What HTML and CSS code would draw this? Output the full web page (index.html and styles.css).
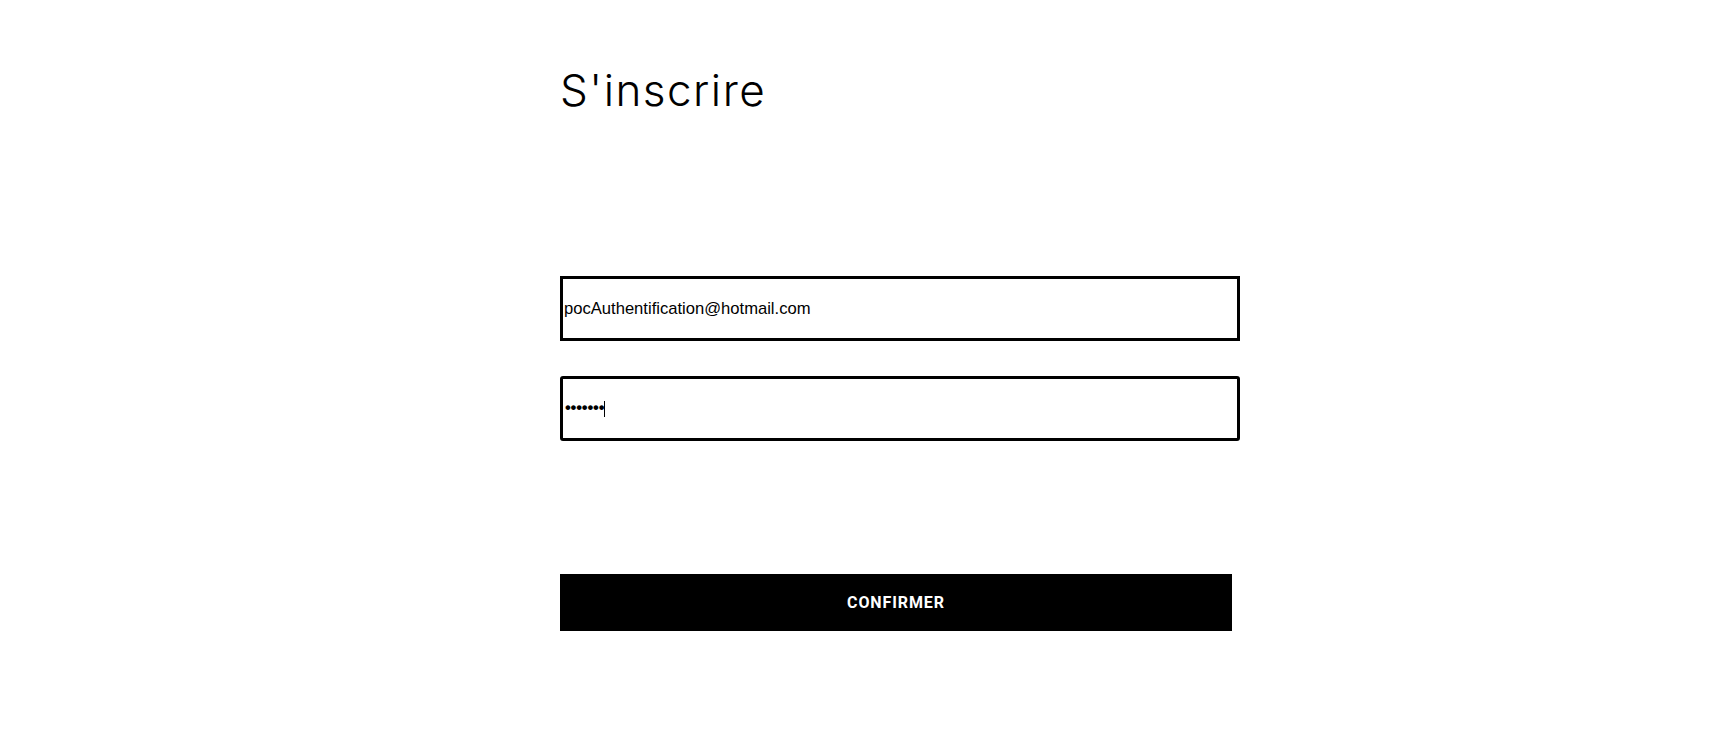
FILE: index.html
```html
<!DOCTYPE html>
<html lang="fr">
<head>
<meta charset="utf-8">
<title>S'inscrire</title>
<link rel="stylesheet" href="styles.css">
</head>
<body>
<main class="page">
  <h1 class="title">S'inscrire</h1>
  <form class="form">
    <div class="field">
      <input class="input" type="email" value="pocAuthentification@hotmail.com">
    </div>
    <div class="field">
      <div class="input input-focus"><span class="dots">•••••••</span><span class="caret"></span></div>
    </div>
    <button class="button" type="button">Confirmer</button>
  </form>
</main>
</body>
</html>
```

FILE: styles.css
```css
html, body {
  margin: 0;
  padding: 0;
  background: #fff;
}

.page {
  padding: 57px 0 0 560px;
  display: flex;
  flex-direction: column;
}

.title {
  margin: 0;
  font-family: Inter, Lato, sans-serif;
  font-weight: 300;
  font-size: 44px;
  line-height: 66px;
  color: #000;
  letter-spacing: 1.5px;
}

.form {
  margin-top: 153px;
  display: flex;
  flex-direction: column;
  gap: 35px;
}

.field {
  display: flex;
}

.input {
  box-sizing: border-box;
  width: 680px;
  height: 65px;
  border: 3px solid #000;
  border-radius: 0;
  padding: 0 0 0 1px;
  margin: 0;
  font-family: "Liberation Sans", Arial, sans-serif;
  font-size: 16.6px;
  color: #000;
  background: #fff;
  outline: none;
}

.input-focus {
  border-radius: 3px;
  display: flex;
  align-items: center;
  padding-left: 2px;
}

.dots {
  font-family: "Liberation Sans", Arial, sans-serif;
  font-size: 16.6px;
  line-height: 1;
  font-weight: bold;
  letter-spacing: -0.2px;
}

.caret {
  display: inline-block;
  width: 1px;
  height: 16px;
  background: #000;
  margin-left: 0;
}

.button {
  margin-top: 98px;
  width: 672px;
  height: 57px;
  border: 0;
  border-radius: 0;
  background: #000;
  color: #fff;
  font-family: Roboto, sans-serif;
  font-weight: 700;
  font-size: 16px;
  text-transform: uppercase;
  letter-spacing: 0.9px;
  padding: 0;
  cursor: pointer;
}
```
